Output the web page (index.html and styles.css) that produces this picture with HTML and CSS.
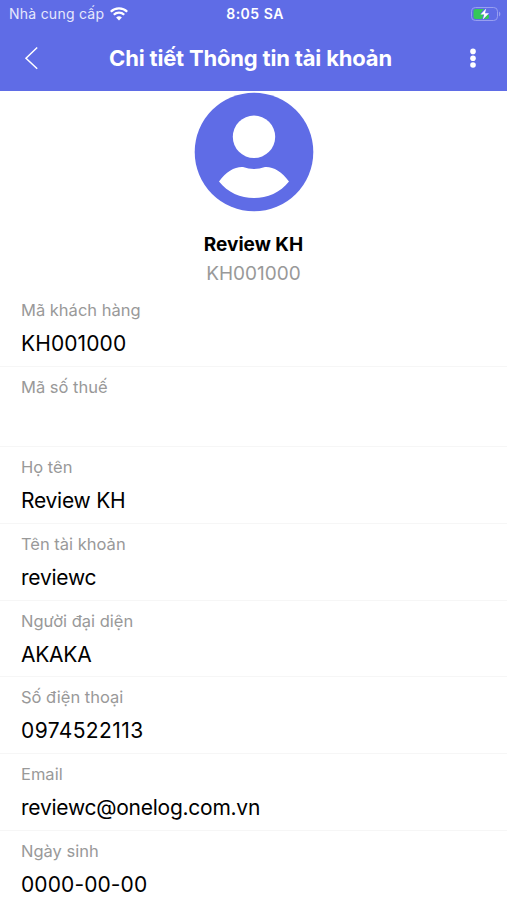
FILE: index.html
```html
<!DOCTYPE html>
<html lang="vi">
<head>
    <meta charset="UTF-8">
    <meta name="viewport" content="width=device-width, initial-scale=1.0">
    <title>Chi tiết Thông tin tài khoản</title>
    <link rel="stylesheet" href="styles.css">
</head>
<body>
    <header class="header">
        <div class="status-bar">
            <div class="carrier">
                <span class="carrier-name">Nhà cung cấp</span>
                <svg class="wifi" width="18" height="14" viewBox="0 0 18 14">
                    <path d="M.8 4.8a11.7 11.7 0 0 1 16.4 0M3.8 7.8a7.4 7.4 0 0 1 10.4 0" fill="none" stroke="#fff" stroke-width="2.3"/>
                    <path d="M9 13.6l-2.9-3a4.2 4.2 0 0 1 5.8 0z" fill="#fff"/>
                </svg>
            </div>
            <span class="time">8:05 SA</span>
            <svg class="battery" width="30" height="14" viewBox="0 0 30 14">
                <rect x=".5" y=".5" width="26" height="13" rx="3.8" fill="none" stroke="#989ff0"/>
                <path d="M4.5 2H13l-4 5h3.5l-1.5 5H4.500a2 2 0 0 1-2-2V4a2 2 0 0 1 2-2z" fill="#34c759"/>
                <path d="M16 8l-3 4h3a2 2 0 0 0 2-2V8z" fill="#34c759"/>
                <path d="M28 4.5v5c1.8-.8 1.8-4.200 0-5z" fill="#989ff0"/>
                <path d="M15.200 1.500L9.500 7.600h3.800l-1.500 5 6.200-6.400h-4z" fill="#fff"/>
            </svg>
        </div>
        <div class="nav-bar">
            <svg class="back" width="14" height="24" viewBox="0 0 14 24">
                <path d="M13.2 1.5L2 12.2l11.2 10.6" fill="none" stroke="#fff" stroke-width="1.5"/>
            </svg>
            <h1>Chi tiết Thông tin tài khoản</h1>
            <svg class="more" width="6" height="20" viewBox="0 0 6 20">
                <circle cx="3" cy="3.4" r="2.8" fill="#fff"/>
                <circle cx="3" cy="10.2" r="2.8" fill="#fff"/>
                <circle cx="3" cy="17" r="2.8" fill="#fff"/>
            </svg>
        </div>
    </header>
    <section class="profile">
        <svg class="avatar" width="120" height="120" viewBox="0 0 120 120">
            <circle cx="60" cy="60" r="59.3" fill="#5f6ce6"/>
            <circle cx="60" cy="44.8" r="21.2" fill="#fff"/>
            <path d="M25 89.5C32 79.5 41 74.5 49 75q11 4 22 0c8-.5 17 4.5 24 14.5C78 111.5 42 111.5 25 89.5z" fill="#fff"/>
        </svg>
        <h2>Review KH</h2>
        <p class="code">KH001000</p>
    </section>
    <dl class="details">
        <div class="row first"><dt>Mã khách hàng</dt><dd>KH001000</dd></div>
        <div class="row empty"><dt>Mã số thuế</dt><dd></dd></div>
        <div class="row"><dt>Họ tên</dt><dd class="text">Review KH</dd></div>
        <div class="row"><dt>Tên tài khoản</dt><dd class="text">reviewc</dd></div>
        <div class="row"><dt>Người đại diện</dt><dd class="text">AKAKA</dd></div>
        <div class="row"><dt>Số điện thoại</dt><dd class="phone">0974522113</dd></div>
        <div class="row"><dt>Email</dt><dd class="text">reviewc@onelog.com.vn</dd></div>
        <div class="row"><dt>Ngày sinh</dt><dd>0000-00-00</dd></div>
    </dl>
</body>
</html>
```
FILE: styles.css
```css
* {
    box-sizing: border-box;
}

body {
    margin: 0;
    height: 900px;
    overflow: hidden;
    background-color: #fff;
    color: #000;
    font-family: Inter, "Liberation Sans", sans-serif;
}

.header {
    height: 91px;
    background-color: #5f6ce6;
    color: #fff;
}

.status-bar {
    display: grid;
    grid-template-columns: 1fr auto 1fr;
    align-items: center;
    height: 27px;
    padding: 0 6px 0 9px;
    font-size: 14px;
}

.carrier {
    display: flex;
    align-items: center;
    gap: 6px;
}

.carrier-name {
    color: #e6e8fc;
    letter-spacing: 0.25px;
}

.time {
    font-size: 14px;
    font-weight: 600;
    letter-spacing: 0.5px;
}

.battery {
    justify-self: end;
}

.nav-bar {
    display: flex;
    align-items: center;
    justify-content: space-between;
    height: 62px;
    padding: 0 31px 0 24px;
}

h1 {
    margin: 0 7px 0 0;
    font-size: 22px;
    font-weight: 700;
    letter-spacing: -0.18px;
    white-space: nowrap;
}

.profile {
    display: flex;
    flex-direction: column;
    align-items: center;
    height: 207px;
    padding-top: 1px;
}

h2 {
    margin: 21px 0 0;
    font-size: 19px;
    font-weight: 700;
    line-height: 24px;
}

.code {
    margin: 5px 0 0;
    color: #999;
    font-size: 19px;
    line-height: 24px;
}

.details {
    margin: 0;
}

.row {
    height: 76.8px;
    padding: 9px 21px 0;
    border-bottom: 1px solid #f6f6f6;
}

.first {
    height: 69px;
    padding-top: 1px;
}

.empty {
    height: 80px;
}

dt {
    color: #999;
    font-size: 16.5px;
    line-height: 22px;
}

dd {
    margin: 10px 0 0;
    font-size: 21px;
    letter-spacing: 0.1px;
    line-height: 26px;
}

.text {
    letter-spacing: -0.25px;
}

.phone {
    letter-spacing: 0.4px;
}
```
